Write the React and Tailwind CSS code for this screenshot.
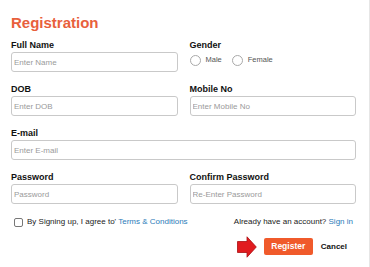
import React from "react";

const font = { fontFamily: '"Liberation Sans", Arial, sans-serif' };

function Field({ label, placeholder }) {
  return (
    <div className="flex flex-col">
      <div className="text-[9px] leading-[11px] font-bold text-[#111]">{label}</div>
      <input
        className="mt-[1px] h-[20px] w-full rounded-[3px] border border-[#c9c9c9] bg-white pl-[2px] text-[8px] text-[#333] outline-none placeholder:text-[#9a9a9a]"
        placeholder={placeholder}
        style={font}
      />
    </div>
  );
}

function Radio({ label }) {
  return (
    <div className="flex items-center gap-[5px]">
      <span className="block h-[11px] w-[11px] rounded-full border border-[#a9a9a9] bg-white" />
      <span className="text-[7.5px] text-[#555]">{label}</span>
    </div>
  );
}

export default function App() {
  return (
    <div
      className="h-[267px] w-[370px] overflow-hidden border-r border-[#e6e6e6] bg-white"
      style={font}
    >
      <div className="w-[356px] pl-[11px] pt-[14px]">
        <div className="text-[15px] leading-[18px] font-bold text-[#e8603c]">Registration</div>
        <div className="mt-[8px] grid grid-cols-2 gap-x-[12px] gap-y-[12px]">
          <Field label="Full Name" placeholder="Enter Name" />
          <div className="flex flex-col">
            <div className="text-[9px] leading-[11px] font-bold text-[#111]">Gender</div>
            <div className="flex h-[18px] items-center gap-[10px]">
              <Radio label="Male" />
              <Radio label="Female" />
            </div>
          </div>
          <Field label="DOB" placeholder="Enter DOB" />
          <Field label="Mobile No" placeholder="Enter Mobile No" />
          <div className="col-span-2">
            <Field label="E-mail" placeholder="Enter E-mail" />
          </div>
          <Field label="Password" placeholder="Password" />
          <Field label="Confirm Password" placeholder="Re-Enter Password" />
        </div>
        <div className="mt-[10px] flex h-[16px] items-center justify-between pr-[3px]">
          <div className="flex items-center pl-[3px]">
            <span className="block h-[9px] w-[9px] rounded-[2px] border border-[#777] bg-white" />
            <span className="ml-[4px] text-[8px] text-[#222]">
              By Signing up, I agree to'{" "}
              <span className="text-[#2b7bb9]">Terms &amp; Conditions</span>
            </span>
          </div>
          <div className="text-[8px] text-[#222]">
            Already have an account? <span className="text-[#2b7bb9]">Sign in</span>
          </div>
        </div>
        <div className="mt-[6px] flex h-[21px] items-center justify-end pr-[9px]">
          <svg width="20" height="22" viewBox="0 0 20 22" className="block">
            <polygon
              points="0.5,5.5 10,5.5 10,0.8 19.3,11 10,21.2 10,16.5 0.5,16.5"
              fill="#e11b1f"
              stroke="#a90f12"
              strokeWidth="0.8"
            />
          </svg>
          <button className="ml-[7px] h-[17px] w-[49px] rounded-[2px] bg-[#f05a2b] text-[8.5px] font-bold text-white">
            Register
          </button>
          <span className="ml-[8px] text-[8px] font-bold text-[#111]">Cancel</span>
        </div>
      </div>
    </div>
  );
}
